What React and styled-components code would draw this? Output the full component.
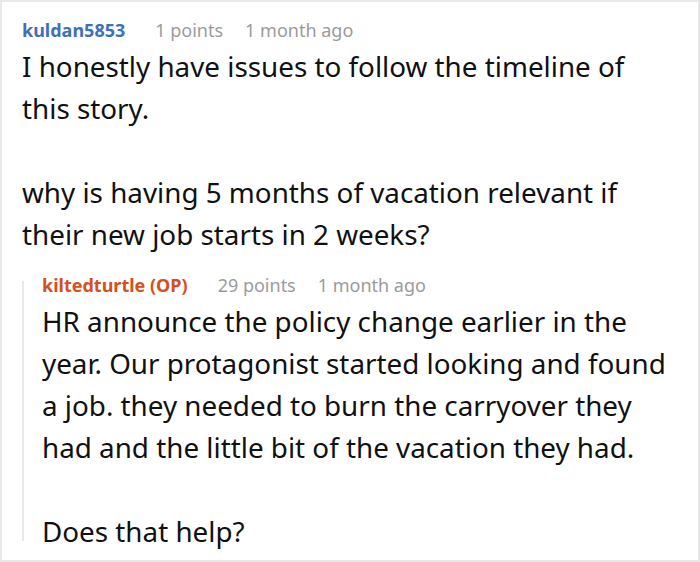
import styled, { createGlobalStyle } from "styled-components";

const GlobalStyle = createGlobalStyle`
  html, body {
    margin: 0;
    padding: 0;
    background: #fff;
  }
  body {
    font-family: "Noto Sans", "Open Sans", sans-serif;
  }
`;

const comment = {
  user: "kuldan5853",
  points: 1,
  time: "1 month ago",
  paragraphs: [
    "I honestly have issues to follow the timeline of this story.",
    "why is having 5 months of vacation relevant if their new job starts in 2 weeks?",
  ],
  reply: {
    user: "kiltedturtle (OP)",
    points: 29,
    time: "1 month ago",
    paragraphs: [
      "HR announce the policy change earlier in the year. Our protagonist started looking and found a job. they needed to burn the carryover they had and the little bit of the vacation they had.",
      "Does that help?",
    ],
  },
};

function Comment({ data, op }) {
  return (
    <>
      <Header>
        <User $op={op}>{data.user}</User>
        <Points>{data.points} points</Points>
        <Time>{data.time}</Time>
      </Header>
      <Body>
        {data.paragraphs.map((p, i) => (
          <p key={i}>{p}</p>
        ))}
      </Body>
    </>
  );
}

export default function App() {
  return (
    <>
      <GlobalStyle />
      <Card>
        <Comment data={comment} />
        <Reply>
          <Comment data={comment.reply} op />
        </Reply>
      </Card>
    </>
  );
}

const Card = styled.div`
  box-sizing: border-box;
  width: 700px;
  height: 562px;
  overflow: hidden;
  border: 2px solid #e8e8e8;
  padding: 16px 22px 0 20px;
`;

const Header = styled.div`
  display: flex;
  align-items: baseline;
  font-size: 18px;
  line-height: 24px;
`;

const User = styled.span`
  font-weight: 700;
  color: ${(p) => (p.$op ? "#d4501c" : "#3d6fbd")};
  margin-right: 30px;
`;

const Points = styled.span`
  color: #9b9b9b;
  margin-right: 22px;
`;

const Time = styled.span`
  color: #9b9b9b;
`;

const Body = styled.div`
  margin-top: 3px;
  font-size: 27.8px;
  line-height: 42px;
  color: #111;

  p {
    margin: 0 0 42px 0;
  }
  p:last-child {
    margin-bottom: 0;
  }
`;

const Reply = styled.div`
  margin-top: 18px;
  padding-left: 20px;
  position: relative;

  &::before {
    content: "";
    position: absolute;
    left: 0;
    top: 8px;
    bottom: 11px;
    width: 2px;
    background: #e8e8e8;
  }
`;
